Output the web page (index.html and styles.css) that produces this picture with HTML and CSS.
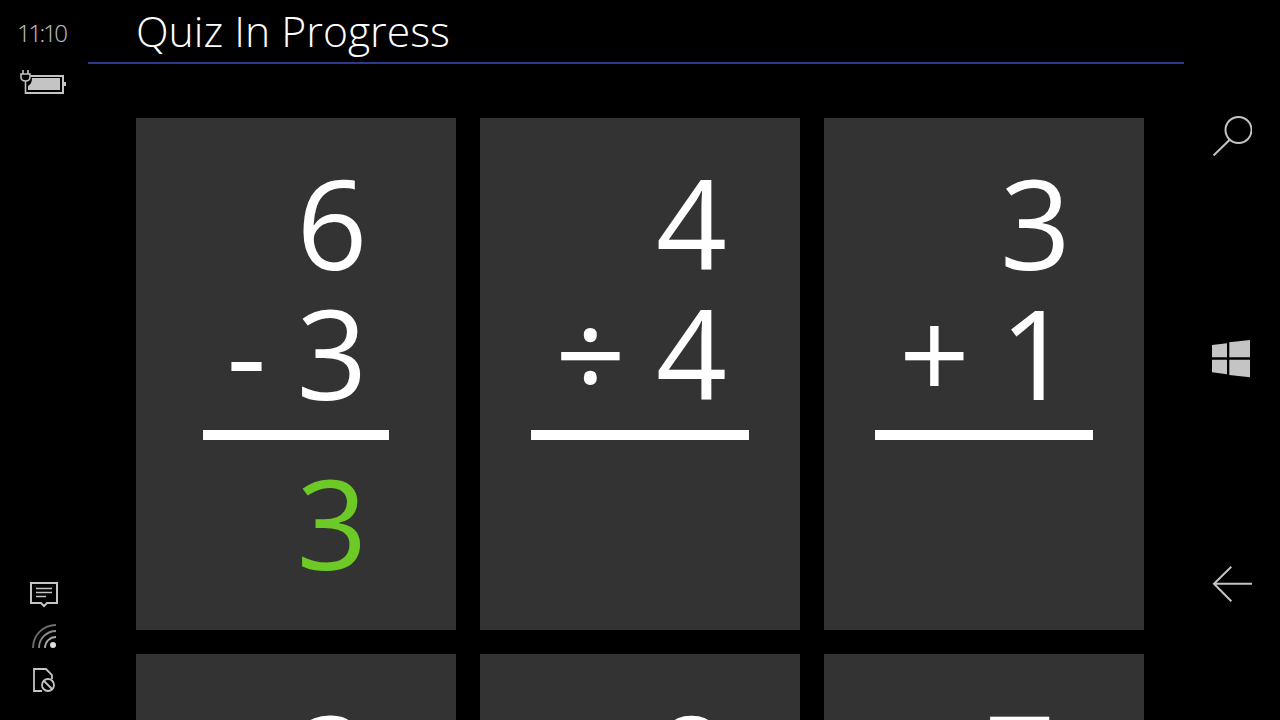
FILE: index.html
```html
<!DOCTYPE html>
<html lang="en">
<head>
  <meta charset="UTF-8" />
  <title>Quiz In Progress</title>
  <link rel="stylesheet" href="styles.css">
</head>
<body>
  <aside class="status">
    <div class="clock">
      <div class="time">11:10</div>
      <svg class="battery" width="46" height="24" viewBox="0 0 46 24">
        <path d="M3 0V4M8 0V4" stroke="#c4c4c4" stroke-width="1.600"/>
        <path d="M1 4H10V7Q10 11 5.500 11Q1 11 1 7ZM5.500 11V24" fill="none" stroke="#c4c4c4" stroke-width="1.600"/>
        <path d="M11 6H43V23H6" fill="none" stroke="#c4c4c4" stroke-width="2"/>
        <path d="M12 8H40V20H8V16Q12 14 12 8Z" fill="#c4c4c4"/>
        <rect x="44" y="12" width="2" height="4" fill="#c4c4c4"/>
      </svg>
    </div>
    <div class="tray">
      <svg width="28" height="26" viewBox="0 0 28 26">
        <path d="M1 1H27V21H17L14 24L11 21H1Z" fill="none" stroke="#c4c4c4" stroke-width="2"/>
        <path d="M6 6.500H22M6 10.500H22M6 14.500H16" stroke="#c4c4c4" stroke-width="1.500"/>
      </svg>
      <svg width="24" height="24" viewBox="0 0 24 24">
        <path d="M1 24A23 23 0 0 1 24 1" fill="none" stroke="#6e6e6e" stroke-width="1.800"/>
        <path d="M7 24A17 17 0 0 1 24 7" fill="none" stroke="#8c8c8c" stroke-width="1.800"/>
        <path d="M13 24A11 11 0 0 1 24 13" fill="none" stroke="#a8a8a8" stroke-width="1.800"/>
        <circle cx="21" cy="21" r="3" fill="#e0e0e0"/>
      </svg>
      <svg width="22" height="28" viewBox="0 0 22 28">
        <path d="M9 27H1V5H13L19 11V15" fill="none" stroke="#c4c4c4" stroke-width="1.800"/>
        <circle cx="15" cy="21" r="6" fill="none" stroke="#c4c4c4" stroke-width="1.800"/>
        <path d="M11 17L19 25" stroke="#c4c4c4" stroke-width="1.800"/>
      </svg>
    </div>
  </aside>

  <main class="page">
    <header class="title">Quiz In Progress</header>
    <div class="cards">
      <section class="card">
        <div class="problem">
          <div class="row">6</div>
          <div class="row"><span class="op">-</span>3</div>
          <div class="rule"></div>
          <div class="answer">3</div>
        </div>
      </section>
      <section class="card">
        <div class="problem">
          <div class="row">4</div>
          <div class="row"><span class="op">÷</span>4</div>
          <div class="rule"></div>
          <div class="answer"></div>
        </div>
      </section>
      <section class="card">
        <div class="problem">
          <div class="row">3</div>
          <div class="row"><span class="op">+</span>1</div>
          <div class="rule"></div>
          <div class="answer"></div>
        </div>
      </section>
      <section class="card">
        <div class="problem">
          <div class="row">3</div>
          <div class="row"><span class="op">-</span>1</div>
          <div class="rule"></div>
          <div class="answer"></div>
        </div>
      </section>
      <section class="card">
        <div class="problem">
          <div class="row">8</div>
          <div class="row"><span class="op">÷</span>2</div>
          <div class="rule"></div>
          <div class="answer"></div>
        </div>
      </section>
      <section class="card">
        <div class="problem">
          <div class="row">7</div>
          <div class="row"><span class="op">-</span>2</div>
          <div class="rule"></div>
          <div class="answer"></div>
        </div>
      </section>
    </div>
  </main>

  <nav class="keys">
    <svg width="40" height="40" viewBox="0 0 40 40">
      <circle cx="26.500" cy="14" r="13" fill="none" stroke="#c4c4c4" stroke-width="2"/>
      <path d="M17.500 24L1.500 39.500" stroke="#c4c4c4" stroke-width="2"/>
    </svg>
    <svg width="40" height="40" viewBox="0 0 40 40">
      <path d="M0 5L15 3.300V17.300H0ZM17.300 2.300L38 0V17.300H17.300ZM0 19.700H15V34.300L0 32.300ZM17.300 19.700H38V37.300L17.300 35Z" fill="#c4c4c4"/>
    </svg>
    <svg width="40" height="40" viewBox="0 0 40 40">
      <path d="M19.300 2.700L2 19.700L19.300 37.300M2 19.700H40" fill="none" stroke="#c4c4c4" stroke-width="2"/>
    </svg>
  </nav>
</body>
</html>
```

FILE: styles.css
```css
body {
  margin: 0;
  height: 720px;
  overflow: hidden;
  display: flex;
  background: #000;
  color: #fff;
  font-family: 'Open Sans', 'Liberation Sans', sans-serif;
}
.status {
  width: 88px;
  flex: none;
  display: flex;
  flex-direction: column;
  justify-content: space-between;
}
.clock {
  padding: 16px 0 0 17px;
}
.time {
  font-size: 24px;
  font-weight: 300;
  line-height: 34px;
  letter-spacing: -2.400px;
  color: #fff;
  opacity: 0.75;
}
.battery {
  display: block;
  margin: 20px 0 0 3px;
}
.tray {
  display: flex;
  flex-direction: column;
  align-items: center;
  gap: 16px;
  padding-bottom: 28px;
}
.tray svg {
  display: block;
}
.page {
  flex: 1;
  min-width: 0;
}
.title {
  height: 62px;
  padding-left: 48px;
  border-bottom: 2px solid #2b3a8c;
  font-size: 42.700px;
  font-weight: 300;
  line-height: 62px;
}
.cards {
  display: grid;
  grid-template-columns: repeat(3, 320px);
  grid-auto-rows: 512px;
  gap: 24px;
  padding: 54px 0 0 48px;
}
.card {
  background: #333;
  display: flex;
  justify-content: center;
  overflow: hidden;
}
.problem {
  padding-top: 39px;
  width: fit-content;
  text-align: right;
  font-size: 124px;
  font-weight: 400;
}
.row {
  height: 130px;
  line-height: 130px;
  padding: 0 22px 0 24px;
  white-space: nowrap;
}
.op {
  margin-right: 30px;
}
.rule {
  height: 10px;
  margin-top: 13px;
  background: #fff;
}
.answer {
  height: 130px;
  line-height: 130px;
  padding: 0 22px 0 24px;
  margin-top: 17px;
  color: #6cc926;
}
.keys {
  width: 96px;
  flex: none;
  display: flex;
  flex-direction: column;
  align-items: center;
  gap: 184px;
  padding-top: 116px;
  box-sizing: border-box;
}
.keys svg {
  display: block;
}
```
